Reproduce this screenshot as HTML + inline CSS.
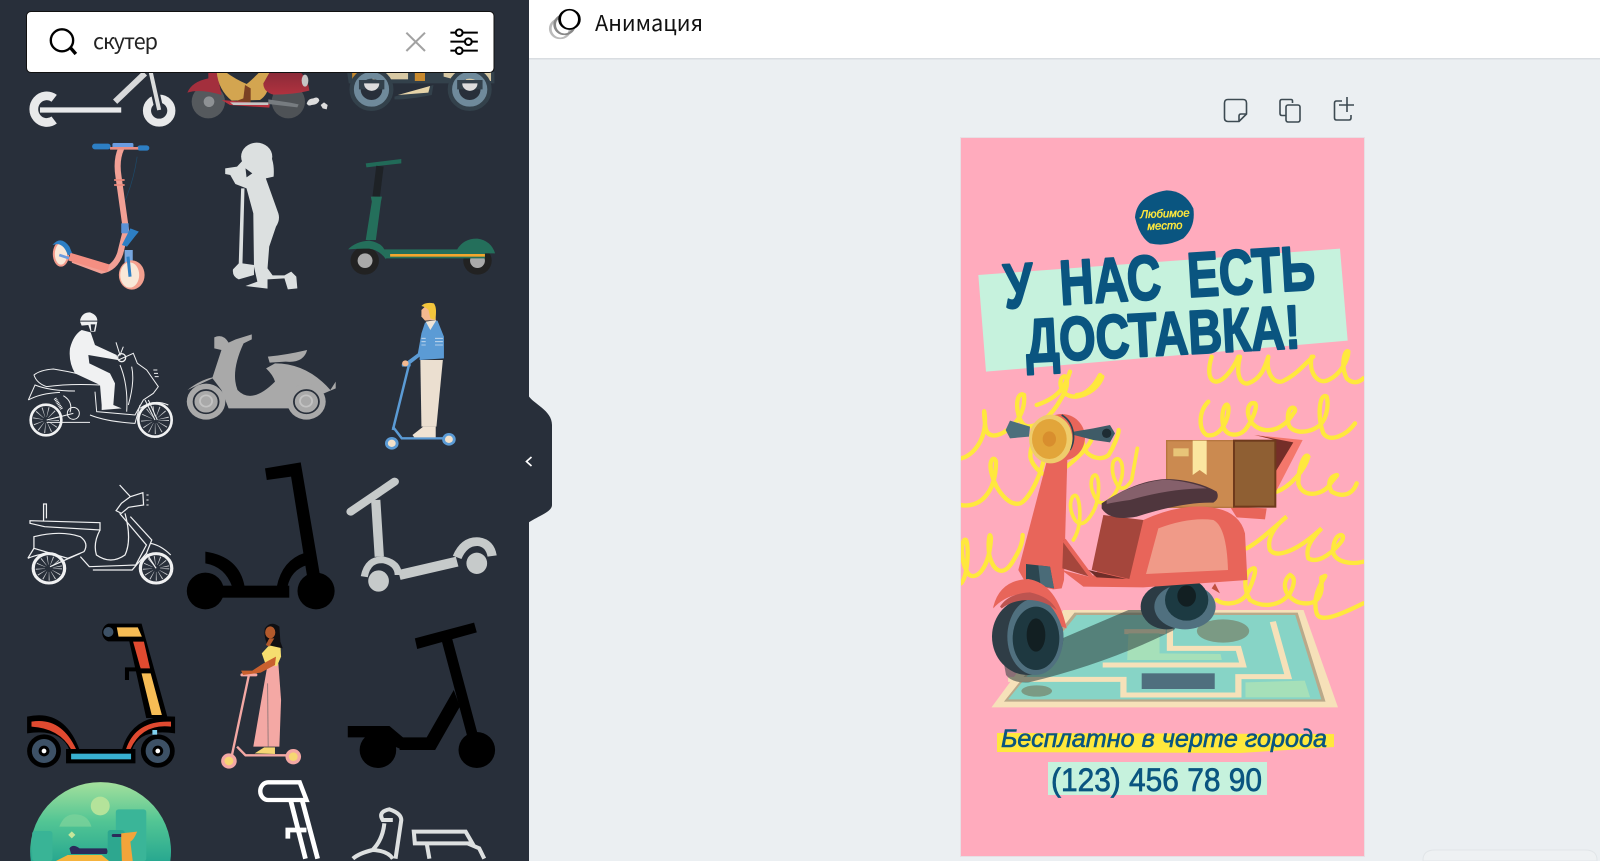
<!DOCTYPE html>
<html lang="ru"><head><meta charset="utf-8"><title>Анимация</title>
<style>
html,body{margin:0;padding:0;width:1600px;height:861px;overflow:hidden;background:#ebeff2}
svg{display:block}
text{font-family:"Liberation Sans","Noto Sans CJK SC",sans-serif}
.ui{font-family:"Noto Sans CJK SC","Liberation Sans",sans-serif}
</style></head><body>
<svg xmlns="http://www.w3.org/2000/svg" width="1600" height="861" viewBox="0 0 1600 861">
<defs>
<clipPath id="pc"><rect x="961" y="138" width="403" height="718"/></clipPath>
<linearGradient id="gc" x1="0" y1="0" x2="0" y2="1"><stop offset="0" stop-color="#a4e09c"/><stop offset=".5" stop-color="#52c594"/><stop offset="1" stop-color="#28a890"/></linearGradient>
<linearGradient id="rd" x1="0" y1="0" x2="0" y2="1"><stop offset="0" stop-color="#8a2a38"/><stop offset="1" stop-color="#b0323f"/></linearGradient>
</defs>
<rect width="1600" height="861" fill="#ebeff2"/>
<!-- top bar -->
<rect x="529" width="1071" height="58" fill="#fff"/><rect x="529" y="58" width="1071" height="1.5" fill="#d9dde1"/>
<g transform="translate(530,0) scale(.5485,.3333)" fill="none">
<ellipse cx="55" cy="86" rx="18" ry="29" stroke="#bbb" stroke-width="5"/>
<ellipse cx="63" cy="74" rx="18" ry="29" stroke="#888" stroke-width="5"/>
<ellipse cx="72" cy="58" rx="18" ry="29" fill="#fff" stroke="#000" stroke-width="5"/>
</g>
<text class="ui" x="595" y="31" font-size="22" fill="#111" textLength="108" lengthAdjust="spacingAndGlyphs">Анимация</text>
<g fill="none" stroke="#3d4a52" stroke-width="1.6">
<path d="M1228,99.5H1243Q1246.5,99.5 1246.5,103V114L1239,121.5H1228Q1224.5,121.5 1224.5,118V103Q1224.5,99.5 1228,99.5Z"/><path d="M1246.5,114H1241Q1239,114 1239,116V121.5"/>
<path d="M1292.5,103V101Q1292.5,99.5 1291,99.5H1282Q1280,99.5 1280,101.5V113.5Q1280,115.5 1282,115.5H1286"/><rect x="1286" y="105" width="14" height="17" rx="2"/>
<path d="M1342,101H1336.5Q1334.5,101 1334.5,103V118Q1334.5,120 1336.5,120H1349Q1351,120 1351,118V115"/><path d="M1339,105H1354M1347,97V112"/>
</g>
<!-- sidebar -->
<rect width="529" height="861" fill="#282f3a"/>
<path d="M528,395C533,404 552,410 552,425V505C552,512 538,516 528,523Z" fill="#282f3a"/>
<path d="M531.5,457L526.5,461.5L531.5,466" fill="none" stroke="#fff" stroke-width="1.7"/>

<!-- red scooter -->
<g transform="translate(180,70) scale(.33333)">
<circle cx="85" cy="95" r="50" fill="#55595d"/><circle cx="87" cy="95" r="16" fill="#8e9194"/>
<circle cx="325" cy="95" r="50" fill="#4e5256"/>
<path d="M22,68Q35,35 85,25L85,5H110L125,75Q60,55 22,68Z" fill="#a32f3d"/>
<path d="M110,5H270L265,30Q270,70 240,90L155,92Q115,60 110,5Z" fill="#d3a550"/>
<path d="M135,5H240Q215,30 200,42Q170,30 135,5Z" fill="#282f3a"/>
<path d="M195,45L212,55L212,100L175,100L172,92L190,85Z" fill="#7a4024"/>
<path d="M270,5H360Q385,30 388,62Q340,74 280,74Q250,65 250,40Z" fill="url(#rd)"/>
<ellipse cx="375" cy="32" rx="10" ry="18" fill="#c5c5c5"/>
<path d="M125,90L150,105L268,113L270,97L210,97Z" fill="#b8323f"/><path d="M150,97H265V105H160Z" fill="#c6c6c6"/>
<path d="M265,88L330,98L356,103L352,112L265,102Z" fill="#777c80"/>
<path d="M380,100Q385,85 400,85Q415,78 418,92Q412,105 395,105Q385,110 380,100Z" fill="#ddd"/>
<path d="M422,105L432,97L443,105L440,118L428,115Z" fill="#ddd"/>
</g>

<!-- row 1 and 2 -->
<g transform="scale(.33864,.33333)">
<!-- scooter 1 -->
<g fill="none" stroke="#e8e9ea">
<path d="M160,295A38,40 0 1 0 160,360" stroke-width="26"/>
<path d="M118,330H358" stroke-width="16"/>
<path d="M340,305L428,220" stroke-width="18" stroke="#d8d9da"/>
<circle cx="470" cy="332" r="36" stroke-width="24"/>
</g>
<path d="M445,216L470,330" stroke="#282f3a" stroke-width="26"/><path d="M445,216L470,330" stroke="#dcdddd" stroke-width="12"/>
<!-- third scooter -->
<path d="M1025,216H1460V250H1030Z" fill="#33414b"/>
<rect x="1040" y="216" width="35" height="27" fill="#c88a2e"/><rect x="1100" y="216" width="105" height="22" fill="#d8c9a4"/><rect x="1225" y="216" width="30" height="27" fill="#c88a2e"/><path d="M1310,216H1360V243L1310,230ZM1375,216H1450V243H1375Z" fill="#d8c9a4"/>
<g fill="none" stroke="#33414b" stroke-width="14"><circle cx="1097" cy="268" r="58"/><circle cx="1387" cy="268" r="58"/></g>
<g fill="none" stroke="#6f8a9b" stroke-width="20"><circle cx="1097" cy="268" r="42"/><circle cx="1387" cy="268" r="42"/></g>
<path d="M1060,240H1135V268H1060ZM1350,240H1425V268H1350Z" fill="#33414b"/>
<path d="M1075,250H1120A22,22 0 0 1 1075,250ZM1365,250H1410A22,22 0 0 1 1365,250Z" fill="#ddd"/>
<path d="M1165,290L1280,255L1275,285Q1200,300 1165,298Z" fill="#33414b"/><path d="M1175,285L1270,258L1265,278Z" fill="#e5d3a8"/>
<!-- pink kick scooter -->
<path d="M358,445Q342,480 350,530L372,690L355,760Q340,805 300,812L215,780" fill="none" stroke="#f2a095" stroke-width="18"/>
<path d="M405,470Q395,540 370,600" fill="none" stroke="#1d4a6a" stroke-width="2"/>
<rect x="272" y="431" width="55" height="17" rx="8" fill="#2d7fc4"/><rect x="405" y="436" width="36" height="16" rx="8" fill="#2d7fc4"/><rect x="332" y="429" width="62" height="19" rx="4" fill="#6b9ce0"/>
<path d="M325,445H408" stroke="#e98d82" stroke-width="8"/>
<path d="M337,540H368M337,555H368" stroke="#ec8b7d" stroke-width="5"/>
<rect x="358" y="670" width="22" height="30" fill="#5b92d6"/>
<path d="M360,735L385,685L410,695L398,710L375,740Z" fill="#2d7fc4"/>
<rect x="368" y="750" width="24" height="40" fill="#77a7e0"/>
<ellipse cx="389" cy="825" rx="38" ry="44" fill="#f3a08f"/><ellipse cx="383" cy="825" rx="28" ry="38" fill="#f8e8d8"/>
<path d="M378,770L384,830" stroke="#2d7fc4" stroke-width="9"/>
<ellipse cx="180" cy="762" rx="24" ry="38" fill="#f29b8c"/><ellipse cx="180" cy="762" rx="18" ry="32" fill="#f8e8d8"/>
<path d="M155,735Q180,705 205,740L215,765H200Q190,735 170,732Z" fill="#2d7fc4"/>
<path d="M175,765L205,775" stroke="#6b9ce0" stroke-width="8"/>
<path d="M205,770L320,805" stroke="#f48f82" stroke-width="24"/>
<!-- silhouette girl -->
<g fill="#dce0e0">
<ellipse cx="758" cy="470" rx="46" ry="42"/>
<path d="M790,450Q812,480 808,530L785,535L822,640Q828,660 815,680L795,740L790,805L805,826L840,826L860,815L875,830L878,865L850,868L840,835L790,838L790,866L725,858L760,845L750,800L748,640L728,565L695,552L680,525L665,522L665,505L700,500L718,480Z"/>
<path d="M712,565H722L716,790L750,795L750,825L705,838Q685,830 688,808L705,790Z"/>
</g>
<path d="M725,505L745,520L728,532Z" fill="#282f3a"/>
<!-- green scooter -->
<path d="M1080,490L1185,477L1185,490L1082,502Z" fill="#216a58"/>
<rect x="1106" y="498" width="22" height="92" fill="#1e2226" transform="rotate(7 1115 540)"/>
<path d="M1095,590H1128L1125,605L1110,720L1080,720L1098,605Z" fill="#246f5b"/>
<circle cx="1077" cy="782" r="42" fill="#222"/><circle cx="1078" cy="782" r="22" fill="#aaa"/>
<circle cx="1410" cy="782" r="42" fill="#222"/><circle cx="1410" cy="782" r="22" fill="#aaa"/>
<path d="M1028,748Q1050,725 1090,722Q1125,728 1135,748H1350Q1370,715 1410,716Q1450,722 1462,760H1432V775H1140V778Q1120,750 1090,746Q1060,745 1028,748Z" fill="#246f5b"/>
<rect x="1152" y="762" width="280" height="8" fill="#f2a62d"/>
</g>

<!-- search box -->
<rect x="26.5" y="11.5" width="467.5" height="61" rx="4.5" fill="#fff" stroke="#111" stroke-width="1"/>
<g transform="scale(.33864,.33333)">
<circle cx="183" cy="121" r="33" fill="none" stroke="#000" stroke-width="7"/>
<path d="M207,142L224,162" stroke="#000" stroke-width="10"/>
<path d="M1200,98L1255,153M1255,98L1200,153" stroke="#a2a2a2" stroke-width="6"/>
<g stroke="#000" stroke-width="6" fill="none"><path d="M1330,98H1411M1330,125H1411M1330,152H1411"/><g fill="#fff"><circle cx="1356" cy="98" r="10"/><circle cx="1383" cy="125" r="10"/><circle cx="1356" cy="152" r="10"/></g></g>
</g>
<text class="ui" x="93" y="49" font-size="21.5" fill="#222" textLength="65">скутер</text>

<!-- moto rider -->
<g transform="translate(20,305) scale(.33333)">
<g fill="none" stroke="#f0f1f2">
<circle cx="78" cy="345" r="46" stroke-width="8"/><circle cx="405" cy="345" r="50" stroke-width="8"/>
<circle cx="78" cy="345" r="24" stroke-width="30" stroke-dasharray="2 11" opacity=".8"/><circle cx="405" cy="345" r="26" stroke-width="32" stroke-dasharray="2 11" opacity=".8"/>
<g stroke-width="3">
<path d="M42,210Q60,195 100,192Q180,205 245,225L240,240Q150,235 80,245Q50,235 42,210Z"/>
<path d="M25,285L45,240Q90,258 165,258M25,285Q60,265 120,262"/>
<path d="M295,165L340,145L352,175L380,195L415,245L400,265L370,285L345,330L230,320L225,260"/>
<path d="M300,180Q325,240 320,320M335,185Q345,230 325,300"/>
<circle cx="160" cy="325" r="18"/><path d="M80,345L160,325M80,352H210"/>
<path d="M210,330Q260,350 345,355L360,300"/><path d="M375,285L405,345M385,285L412,345"/>
<path d="M360,310Q400,280 445,300"/><path d="M130,272Q160,290 150,322"/>
<path d="M288,112L300,150L310,125"/><path d="M400,195H412M402,205H414M404,215H416"/>
</g>
<path d="M105,280L125,312" stroke-width="9" stroke-dasharray="3 2"/>
<circle cx="305" cy="158" r="12" stroke-width="4"/>
</g>
<path fill="#f0f1f2" d="M180,47Q185,22 210,22Q232,30 232,47ZM185,75L212,82L225,120L290,150L293,165L205,150L208,175L270,205L285,235L280,300L305,310L245,315L245,300L240,240L165,205Q145,170 150,130Q160,90 185,75Z"/>
<path d="M180,50H232L226,80H212L205,60L185,62Z" fill="#f0f1f2"/><path d="M212,58H226L222,78H214Z" fill="#282f3a"/>
</g>

<!-- row 3 and 4 -->
<g transform="translate(0,300) scale(.35714,.33333)">
<!-- vespa -->
<g fill="#a9a9a9">
<path d="M600,112Q625,100 640,128L660,118L705,103L705,118L682,130Q645,215 665,270Q705,315 770,245Q765,225 745,205L770,190Q860,190 925,270L940,245V265L925,272L810,325H640L620,270L595,235L525,270Q560,240 595,232L620,150L600,145Z"/>
<path d="M750,170Q800,165 860,150Q850,190 800,185L755,188Z"/>
<circle cx="577" cy="305" r="54"/><circle cx="858" cy="305" r="54"/>
</g>
<g fill="none" stroke="#282f3a" stroke-width="5"><circle cx="577" cy="305" r="35"/><circle cx="858" cy="305" r="35"/></g>
<circle cx="577" cy="303" r="17" fill="none" stroke="#c3c3c3" stroke-width="5"/><circle cx="857" cy="303" r="17" fill="none" stroke="#c3c3c3" stroke-width="5"/>
<!-- man -->
<path d="M1145,195L1100,390M1100,380L1125,415H1250" fill="none" stroke="#5b9bd5" stroke-width="7"/>
<rect x="1125" y="190" width="25" height="10" rx="4" fill="#5b9bd5"/>
<circle cx="1097" cy="430" r="19" fill="#5b9bd5"/><circle cx="1097" cy="430" r="11" fill="#f3e1c9"/><circle cx="1257" cy="418" r="19" fill="#5b9bd5"/><circle cx="1257" cy="418" r="11" fill="#f3e1c9"/>
<path d="M1177,180H1240L1222,380H1180Z" fill="#ebdfd0"/>
<path d="M1155,405L1185,380H1220V412H1160Z" fill="#f0e3d3"/>
<path d="M1190,68L1225,62L1243,110L1243,175L1175,180V170L1145,195L1135,188L1170,160L1180,100Z" fill="#5b9bd5"/>
<path d="M1192,65L1222,60L1205,90Z" fill="#efe5d8"/>
<path d="M1180,115H1192M1180,125H1192M1180,135H1192M1218,115H1240M1218,125H1240M1218,135H1240" stroke="#cfe0f0" stroke-width="2.5"/>
<path d="M1180,30L1190,20L1220,30V60L1190,62L1180,50Z" fill="#f4b990"/>
<path d="M1180,18Q1190,5 1215,10Q1225,25 1218,60L1205,55L1200,30Q1190,20 1180,18Z" fill="#f4c63c"/>
<circle cx="1135" cy="190" r="9" fill="#f4b990"/>
<!-- outline vespa -->
<g fill="none" stroke="#f0f1f2">
<circle cx="137" cy="805" r="44" stroke-width="9"/><circle cx="437" cy="805" r="44" stroke-width="9"/>
<circle cx="137" cy="805" r="24" stroke-width="26" stroke-dasharray="2 10" opacity=".8"/><circle cx="437" cy="805" r="24" stroke-width="26" stroke-dasharray="2 10" opacity=".8"/>
<g stroke-width="3.5">
<path d="M122,665V612H130V655M84,662L280,668L280,690L125,680L84,670Z"/>
<path d="M95,710Q170,690 225,710Q250,730 235,755L190,775L95,745Z"/><path d="M78,775L95,745M78,775Q100,765 130,760"/>
<path d="M280,690Q260,730 270,765Q310,795 350,765Q370,720 350,640"/>
<path d="M335,640L410,735L380,795L250,800L225,770M365,650L425,720L410,760L370,810H260"/>
<path d="M335,555L365,590M365,590L400,578L402,615L360,622L340,640L325,632L340,610Z"/>
<path d="M420,730Q450,735 478,765M410,760L437,805"/>
<path d="M140,800L225,760"/></g>
<path d="M410,585H416M410,600H416M410,615H416" stroke-width="3"/>
</g>
<!-- black scooter -->
<g fill="#000">
<path d="M742,505L842,487L895,820L860,830L815,530L747,540Z"/>
<path d="M575,755Q670,770 685,860L650,860Q630,800 575,790Z"/>
<path d="M775,860Q790,780 855,758L860,795Q815,810 805,860Z"/>
<rect x="610" y="857" width="200" height="36"/>
<ellipse cx="575" cy="873" rx="52" ry="55"/><ellipse cx="885" cy="873" rx="52" ry="55"/>
</g>
<!-- grey scooter -->
<g fill="none" stroke="#c6caca" stroke-linecap="round">
<path d="M982,635L1105,545" stroke-width="24"/>
<path d="M1052,600L1062,770" stroke-width="26" stroke-linecap="butt"/>
<path d="M1118,825L1280,785" stroke-width="30" stroke-linecap="butt"/>
<path d="M1020,830Q1030,775 1075,780Q1115,790 1115,825" stroke-width="20" stroke-linecap="butt"/>
<path d="M1280,772Q1300,722 1340,725Q1372,730 1378,768" stroke-width="26" stroke-linecap="butt"/>
</g>
<ellipse cx="1060" cy="843" rx="29" ry="32" fill="#c6caca"/><ellipse cx="1335" cy="790" rx="29" ry="32" fill="#c6caca"/>
</g>

<!-- row 5 and 6 -->
<g transform="translate(0,600) scale(.33864,.33333)">
<!-- colored scooter -->
<g>
<path d="M320,75H415L490,350H435L385,120H320A22,24 0 0 1 320,75Z" fill="#000" stroke="#000" stroke-width="8"/>
<circle cx="320" cy="96" r="15" fill="#3d5166"/>
<path d="M345,82H407L419,110H350Z" fill="#f6bc55"/>
<path d="M393,125H425L443,205H415Z" fill="#e04a30"/>
<path d="M418,220H445L478,345H448Z" fill="#f6bc55"/>
<path d="M375,240V208H415" fill="none" stroke="#000" stroke-width="12"/>
<path d="M80,350Q190,325 235,450H205Q180,385 80,400Z" fill="#000"/>
<path d="M93,365Q180,350 225,448H210Q175,385 93,380Z" fill="#e04a30"/>
<path d="M360,450Q390,340 517,350V400Q410,385 390,450Z" fill="#000"/>
<path d="M372,448Q400,360 505,365V380Q420,370 385,448Z" fill="#e04a30"/>
<rect x="195" y="447" width="205" height="43" fill="#000"/><rect x="210" y="461" width="177" height="17" fill="#38b0d0"/>
<circle cx="130" cy="453" r="50" fill="#000"/><circle cx="130" cy="453" r="36" fill="#3d5166"/><circle cx="130" cy="453" r="16" fill="#000"/><circle cx="130" cy="453" r="7" fill="#fff"/>
<circle cx="466" cy="453" r="50" fill="#000"/><circle cx="466" cy="453" r="36" fill="#3d5166"/><circle cx="466" cy="453" r="16" fill="#000"/><circle cx="466" cy="453" r="7" fill="#fff"/>
<rect x="450" y="390" width="14" height="14" fill="#7fd0ee"/>
</g>
<!-- woman -->
<path d="M735,225L685,465M700,440L725,466H870" fill="none" stroke="#f4a8a4" stroke-width="7"/>
<rect x="710" y="220" width="50" height="9" rx="4" fill="#f4a8a4"/>
<circle cx="676" cy="483" r="23" fill="#f4a8a4"/><circle cx="676" cy="483" r="13" fill="#f6d673"/><circle cx="866" cy="470" r="23" fill="#f4a8a4"/><circle cx="866" cy="470" r="13" fill="#f6d673"/>
<path d="M790,195L822,190L830,300L825,440L748,440L770,310Z" fill="#f4a8a4"/>
<path d="M790,250L792,440" stroke="#9b7c7c" stroke-width="3"/>
<path d="M752,460L780,442H812L812,462Z" fill="#f6d673"/>
<path d="M773,160L800,130L828,135L830,170L818,198L785,195Z" fill="#f5de6f"/>
<path d="M778,190L815,170L812,195L770,218L718,225L712,212L745,212Z" fill="#c9602e"/>
<path d="M782,85Q800,60 825,80L828,125L835,145L790,135Q778,110 782,85Z" fill="#0f0f12"/>
<ellipse cx="798" cy="97" rx="15" ry="18" fill="#b35a2c"/>
<path d="M795,115L810,115L795,140L785,135Z" fill="#b35a2c"/>
<!-- black scooter 2 -->
<g fill="#000">
<path d="M1225,115L1400,68L1408,97L1232,147Z"/>
<path d="M1305,125L1335,115L1410,400L1380,410Z"/>
<path d="M1340,270L1358,320L1285,450H1180V412H1260Z"/>
<path d="M1027,378H1150L1190,412V450L1100,412H1027Z"/>
<ellipse cx="1116" cy="450" rx="54" ry="54"/><ellipse cx="1408" cy="450" rx="54" ry="54"/>
</g>
<!-- green circle -->
<path d="M91,783A208,208 0 1 1 503,783Z" fill="url(#gc)"/>
<circle cx="296" cy="618" r="28" fill="#b4e39a"/>
<path d="M175,680Q190,640 225,643Q260,645 270,680Z" fill="#7bd29a" opacity=".8"/>
<rect x="342" y="628" width="90" height="155" rx="8" fill="#3ab598"/>
<rect x="95" y="693" width="60" height="90" rx="8" fill="#39b496"/>
<rect x="318" y="690" width="50" height="93" rx="8" fill="#2da78f"/>
<rect x="205" y="697" width="15" height="15" fill="#c6e69a" transform="rotate(45 212 704)"/>
<path d="M205,745Q215,730 235,745H315Q320,755 315,762H210Z" fill="#2b2a5a"/>
<rect x="330" y="702" width="30" height="9" rx="4" fill="#2b2a5a"/>
<path d="M358,700L405,695Q395,720 385,725L392,783H360L358,725Z" fill="#f3a43a"/>
<path d="M165,783L200,765H300L322,783Z" fill="#f5b23c"/>
<!-- white outline -->
<g fill="none" stroke="#fff" stroke-width="14">
<path d="M792,547H885L905,600H792A23,26 0 0 1 792,547Z" stroke-width="13"/>
<path d="M858,600L902,776M892,600L938,776"/>
<path d="M905,690H850V716"/>
</g>
<circle cx="792" cy="571" r="14" fill="#282f3a"/>
<!-- grey outline -->
<g fill="none" stroke="#dde0e0" stroke-width="12">
<path d="M1160,660L1130,660Q1115,635 1150,628Q1185,640 1185,660L1168,776"/>
<path d="M1135,670Q1130,720 1100,750Q1060,760 1042,776"/>
<path d="M1100,750Q1145,752 1160,776"/>
<path d="M1222,695H1375L1395,730H1225ZM1260,730L1268,776M1380,730L1415,745L1430,776"/>
</g>
</g>

<!-- poster -->
<rect x="960" y="137" width="405" height="720" fill="#e7dfe4"/>
<rect x="961" y="138" width="403" height="718" fill="#ffabbd"/>
<g clip-path="url(#pc)">
<!-- scribbles -->
<g transform="translate(950,380) scale(.33333)" fill="none" stroke="#ffe83d" stroke-width="13" stroke-linecap="round">
<path d="M33,235c30,-5 75,-50 72,-120c-3,-40 -5,-20 2,30c5,25 30,30 65,5c30,-20 55,-60 50,-105c-25,-15 -30,60 0,90c25,15 70,-15 100,-60c25,-40 35,-60 25,-85c-20,-10 -30,60 30,60c40,-5 70,-30 80,-60"/>
<path d="M33,375c50,10 105,-30 105,-130c-5,-20 -25,-5 -12,40c12,45 50,95 85,85c30,-15 70,-100 75,-160c-5,-35 -45,-40 -45,20c5,30 45,70 75,55c35,-25 95,-70 110,-110c-2,-20 -40,-40 -25,25c8,30 50,45 75,25c15,-25 30,-60 30,-75"/>
<path d="M33,610c20,-20 25,-110 15,-130c-15,-10 -20,70 10,105c25,15 60,-25 65,-110c-5,-30 -10,20 -5,50c10,45 40,70 70,20c15,-25 30,-50 30,-80"/>
<path d="M370,480Q395,440 388,375Q382,335 368,350Q352,380 375,420Q395,445 420,410Q450,370 445,305Q440,275 428,290Q415,320 440,360Q465,385 495,340Q525,290 515,250Q505,225 490,245Q480,280 505,320Q525,335 545,300L562,205" stroke-width="11"/>
<path d="M775,65c-30,30 -30,85 -5,100c40,10 70,-50 65,-85c-5,-20 -25,10 -15,60c10,30 45,30 65,10c20,-25 40,-70 30,-80c-30,-10 -35,70 30,80c40,5 70,-25 85,-50c20,-20 -25,-35 -15,30c5,30 60,35 95,5c25,-25 25,-70 20,-85c-20,-15 -30,55 -10,110c20,30 70,5 95,-30"/>
<path d="M980,335c40,-15 85,-65 95,-105c-10,-15 -30,30 -30,80c10,40 60,40 90,10c20,-30 30,-35 25,-35c-20,5 -30,25 -15,50c25,15 60,15 75,-25"/>
<path d="M890,505c30,-15 80,-60 120,-95c-40,30 -60,70 -50,100c20,25 80,5 155,-65c-30,30 -50,60 -40,90c25,15 60,-5 95,-45c30,-35 -25,-40 -20,30c10,25 50,35 90,25"/>
<path d="M800,660c20,15 60,15 85,-10c20,-30 40,-90 25,-85c-30,10 -30,60 -10,95c30,20 85,25 120,-20c20,-40 10,-50 0,-55c-25,20 -20,60 20,80c30,10 70,10 75,-40c0,-40 -5,-30 5,-35c25,-15 -40,40 -20,110c10,30 70,5 140,-30"/>
<path d="M785,-70c-15,50 -5,75 15,75c30,-5 60,-60 65,-75M870,-70c-15,60 5,85 25,80c40,-15 50,-50 60,-80M955,-70c-10,50 20,90 50,70c40,-20 70,-60 85,-70M1085,-70c-10,50 20,85 50,70c35,-15 60,-60 60,-85c-10,-10 -25,40 -5,80c20,20 40,10 50,0"/>
<path d="M360,-25c-15,50 -40,80 -100,100M450,-15c-15,30 -40,60 -70,60"/>
</g>
<!-- map -->
<g transform="translate(950,620) scale(.41494,.33333)">
<path d="M273,-30H852L935,262H100Z" fill="#f6e1b9"/>
<path d="M300,-22H838L905,245H130Z" fill="#b9a98a"/>
<path d="M305,-15H832L895,238H140Z" fill="#87d4c6"/>
<g fill="none" stroke="#f6e1b9" stroke-width="15">
<path d="M140,178H418V225H695V170H815L778,5"/>
<path d="M368,135H706L695,85H530V5"/><path d="M420,35H520"/>
</g>
<path d="M712,187L855,182L868,232H712Z" fill="#a6e0b9"/>
<path d="M430,40H505V100L652,102L655,120H427Z" fill="#a6e0b9"/>
<rect x="462" y="160" width="176" height="47" fill="#4f6f7e"/>
<ellipse cx="658" cy="33" rx="63" ry="35" fill="#7b9a84"/>
<ellipse cx="209" cy="213" rx="37" ry="17" fill="#7b9a84"/>
<path d="M135,165Q150,190 190,187Q380,130 540,30L570,-30L430,-30L130,130Z" fill="#2b3c3c" opacity=".55"/>
</g>
<!-- scooter -->
<g transform="translate(950,380) scale(.33333)">
<path d="M912,165L1058,180L975,340L975,180Z" fill="#f4776b"/>
<path d="M915,165L1030,187L975,278L975,180Z" fill="#752e28"/>
<path d="M840,380L950,385L945,418L860,412Z" fill="#e8655a"/>
<rect x="650" y="182" width="202" height="200" fill="#cb8a50" stroke="#b67640" stroke-width="4"/>
<rect x="852" y="182" width="124" height="198" fill="#8f5f33" stroke="#6e3a1c" stroke-width="6"/>
<path d="M728,182H770V285L749,270L728,285Z" fill="#fbe6a0"/>
<rect x="670" y="205" width="46" height="24" fill="#e8c578"/>
<ellipse cx="650" cy="680" rx="78" ry="68" fill="#2b3b44"/><ellipse cx="705" cy="680" rx="92" ry="68" fill="#50707f"/><ellipse cx="710" cy="660" rx="65" ry="62" fill="#1c3a42"/><ellipse cx="710" cy="648" rx="28" ry="32" fill="#121f22"/>
<circle cx="335" cy="172" r="70" fill="#e8655a"/>
<path d="M290,245L352,235L342,600L335,625L310,628L228,610L205,570Z" fill="#e8655a"/>
<path d="M340,480L425,592L337,565Z" fill="#a5463c"/><path d="M342,480L425,592" stroke="#e8655a" stroke-width="12"/>
<path d="M580,420Q700,365 800,385Q870,400 885,460L892,600L580,622L400,620L335,570L425,592Z" fill="#e8655a"/>
<path d="M460,405L580,420L538,597L425,570Z" fill="#a5463c"/>
<path d="M415,570L530,597L440,592Z" fill="#6e2d28"/>
<path d="M625,445Q720,410 790,420Q830,440 834,570L588,582Z" fill="#f09a88"/>
<path d="M795,610L810,640L785,625Z" fill="#c1503f"/>
<path d="M455,370Q560,300 650,297Q740,300 800,335Q810,355 790,368Q700,365 560,410Q480,425 455,385Z" fill="#4f363d"/>
<path d="M470,360Q560,305 650,299Q720,305 770,325Q660,325 540,360Q500,365 470,372Z" fill="#85606b"/>
<path d="M240,140L180,122L167,150L180,175L237,170Z" fill="#4d6f7c"/>
<path d="M372,155L430,145L480,135L495,160L480,187L430,180L372,165Z" fill="#3f5b67"/><ellipse cx="470" cy="160" rx="14" ry="14" fill="#1e2c33"/>
<path d="M228,552L300,560L312,625L228,610Z" fill="#2c4650"/><path d="M265,556L300,560L312,625L272,618Z" fill="#4a6b78"/>
<path d="M335,105A65,73 0 0 1 360,210" stroke="#2c4650" stroke-width="5" fill="none"/>
<ellipse cx="302" cy="177" rx="65" ry="73" fill="#efcc6b"/><ellipse cx="298" cy="177" rx="52" ry="60" fill="#e2a53a"/><ellipse cx="298" cy="177" rx="20" ry="23" fill="#d88e2e"/>
<ellipse cx="233" cy="770" rx="107" ry="115" fill="#2f3d46"/><ellipse cx="256" cy="770" rx="84" ry="115" fill="#50707f"/><ellipse cx="258" cy="775" rx="70" ry="95" fill="#1e3840"/><ellipse cx="258" cy="765" rx="28" ry="50" fill="#121f22"/>
<path d="M130,680Q150,600 235,597Q320,610 350,745L335,740Q310,660 240,640Q170,640 130,685Z" fill="#e8655a"/>
<path d="M150,680Q175,640 240,637Q300,650 320,690Q280,660 235,660Q190,660 155,685Z" fill="#bd5450"/>
</g>
<!-- mint heading -->
<g transform="translate(950,130) scale(.33333)">
<path d="M85,435L1170,356L1193,632L108,725Z" fill="#c6f2dd"/>
<path d="M555,262Q560,195 650,181Q705,182 730,235Q738,290 700,325Q650,352 600,340Q568,320 555,262Z" fill="#0a5580"/>
<text transform="translate(645,262) rotate(-2)" font-size="34" font-style="italic" fill="#ffe83d" stroke="#ffe83d" stroke-width="1.2" text-anchor="middle">Любимое</text>
<text transform="translate(645,298) rotate(-2)" font-size="34" font-style="italic" fill="#ffe83d" stroke="#ffe83d" stroke-width="1.2" text-anchor="middle">место</text>
<text transform="translate(165,535) rotate(-3.5)" font-size="190" font-weight="700" fill="#0a5580" stroke="#0a5580" stroke-width="6" stroke-linejoin="round" textLength="935" lengthAdjust="spacingAndGlyphs">У&#160;&#160;НАС&#160;&#160;ЕСТЬ</text>
<text transform="translate(230,697) rotate(-3)" font-size="185" font-weight="700" fill="#0a5580" stroke="#0a5580" stroke-width="6" stroke-linejoin="round" textLength="825" lengthAdjust="spacingAndGlyphs">ДОСТАВКА!</text>
</g>
<!-- footer text -->
<path d="M997,733L1334,734V747L1240,753L997,752Z" fill="#ffe83d"/>
<text x="1001" y="747" font-size="25" font-style="italic" fill="#0a5580" stroke="#0a5580" stroke-width=".6" textLength="326" lengthAdjust="spacingAndGlyphs">Бесплатно в черте города</text>
<rect x="1048" y="762" width="219" height="33" fill="#c6f2dd"/>
<text x="1051" y="791" font-size="32" fill="#0a5580" stroke="#0a5580" stroke-width=".7" textLength="211" lengthAdjust="spacingAndGlyphs">(123) 456 78 90</text>
</g>
<!-- bottom right widget -->
<path d="M1423,861V860Q1423,850 1435,850H1585Q1597,850 1597,860V861Z" fill="#eef1f3" stroke="#e1e5e8"/>
</svg>
</body></html>
